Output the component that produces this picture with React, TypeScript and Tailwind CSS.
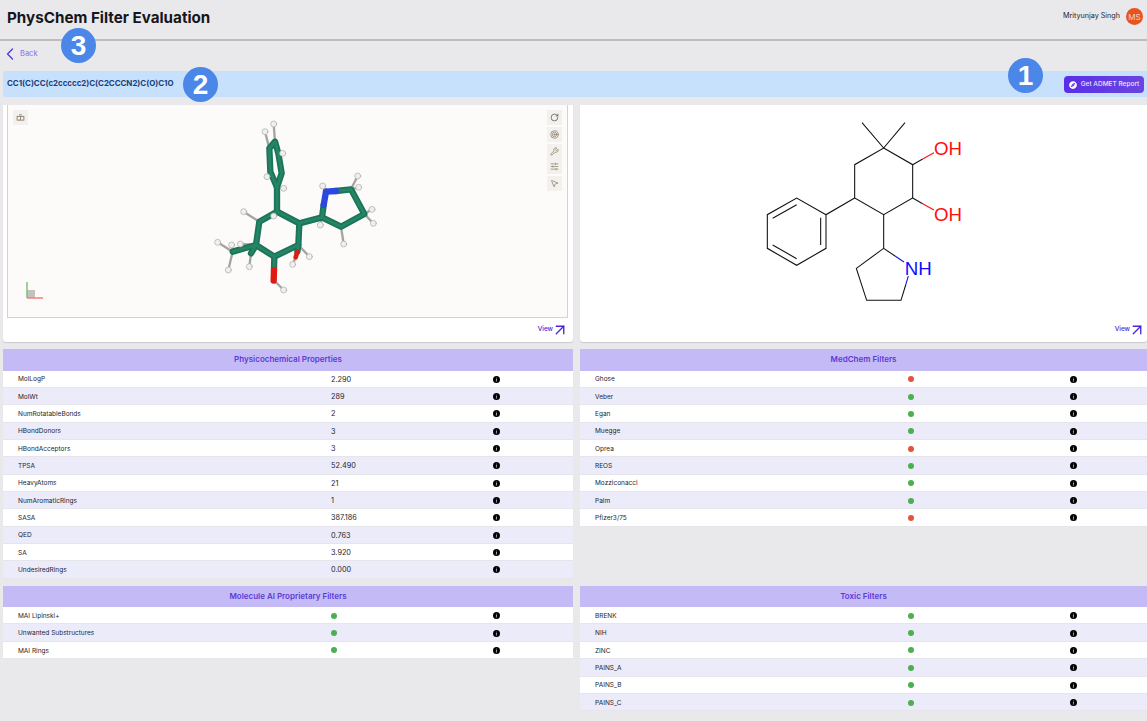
import { ArrowUpRight, ChevronLeft, MousePointer2, RotateCw, SlidersHorizontal, Target, Wrench } from 'lucide-react'
import { BsInfoCircleFill } from 'react-icons/bs'
import { FaCompass } from 'react-icons/fa'

const physProps = [
  ['MolLogP', '2.290'],
  ['MolWt', '289'],
  ['NumRotatableBonds', '2'],
  ['HBondDonors', '3'],
  ['HBondAcceptors', '3'],
  ['TPSA', '52.490'],
  ['HeavyAtoms', '21'],
  ['NumAromaticRings', '1'],
  ['SASA', '387.186'],
  ['QED', '0.763'],
  ['SA', '3.920'],
  ['UndesiredRings', '0.000'],
]
const medChem: [string, boolean][] = [
  ['Ghose', false],
  ['Veber', true],
  ['Egan', true],
  ['Muegge', true],
  ['Oprea', false],
  ['REOS', true],
  ['Mozziconacci', true],
  ['Palm', true],
  ['Pfizer3/75', false],
]
const maiFilters: [string, boolean][] = [
  ['MAI Lipinski+', true],
  ['Unwanted Substructures', true],
  ['MAI Rings', true],
]
const toxicFilters: [string, boolean][] = [
  ['BRENK', true],
  ['NIH', true],
  ['ZINC', true],
  ['PAINS_A', true],
  ['PAINS_B', true],
  ['PAINS_C', true],
]

// 3D model, coordinates from a 600x600 canvas
const hBonds = [
  [252, 95, 248, 42], [235, 115, 222, 65], [262, 130, 275, 130], [238, 185, 228, 200], [258, 232, 278, 235],
  [205, 335, 158, 305], [258, 305, 248, 318], [125, 425, 80, 397], [125, 425, 122, 405], [125, 425, 112, 480],
  [195, 405, 148, 402], [180, 430, 175, 470], [322, 405, 355, 440], [315, 440, 305, 463], [248, 510, 278, 540],
  [405, 245, 395, 228], [480, 238, 500, 198], [480, 238, 503, 232], [520, 312, 543, 298], [520, 312, 547, 340],
  [393, 322, 388, 345], [450, 350, 458, 402],
]
const greenBonds = [
  'M252 95L235 115L238 185L258 232L272 190L262 130Z',
  'M258 232L258 305',
  'M258 305L205 335L195 405L250 440L322 405L325 340Z',
  'M325 340L393 322L450 350L520 312L480 238L435 243',
  'M393 322L398 285',
  'M195 405L125 425M195 405L180 430',
  'M250 440L249 480M322 405L319 425',
]

const Molecule3D = () => (
  <svg viewBox="0 0 600 600" className="absolute left-[183px] top-[5px] w-[200px] h-[200px]" fill="none" strokeLinecap="round" strokeLinejoin="round">
    {hBonds.map(([a, b, c, d]) => (
      <line key={`${c}-${d}`} x1={a} y1={b} x2={c} y2={d} stroke="#a4a4a2" strokeWidth="7" />
    ))}
    {greenBonds.map((d) => (
      <path key={d} d={d} stroke="#1b7558" strokeWidth="19" />
    ))}
    {greenBonds.map((d) => (
      <path key={`${d}-light`} d={d} stroke="#268467" strokeWidth="8" />
    ))}
    <path d="M405 245L398 285" stroke="#2a48e0" strokeWidth="19" />
    <path d="M405 245L435 243" stroke="#2a48e0" strokeWidth="19" />
    <path d="M249 480L248 512" stroke="#e01a12" strokeWidth="19" />
    <path d="M319 425L314 442" stroke="#d8201a" strokeWidth="14" />
    {hBonds.map(([, , c, d]) => (
      <circle key={`${c}_${d}`} cx={c} cy={d} r="9" fill="#efefed" stroke="#a8a8a6" strokeWidth="2" />
    ))}
  </svg>
)

const Molecule2D = () => (
  <svg viewBox="0 0 720 600" className="w-[240px] h-[200px]" fill="none" stroke="#111" strokeWidth="3.2">
    <path d="M366 38L431 114L495 38M431 114L518 164L518 264L431 314L344 264L344 164Z" />
    <path d="M344 264L258 314L258 415L170 466L82 415L82 314L170 264L258 314" />
    <path d="M242 323L242 405M170 284L98 325M170 446L98 405" />
    <path d="M431 314L431 415L349 475L380 571L483 571L497 525" />
    <path d="M431 415L465 438" />
    <path d="M465 438L492 456" stroke="#1a1ae0" />
    <path d="M518 164L548 147" />
    <path d="M548 147L582 128" stroke="#ff1010" />
    <path d="M518 264L548 281" />
    <path d="M548 281L582 300" stroke="#ff1010" />
    <path d="M497 525L505 498" stroke="#1a1ae0" />
    <text x="582" y="134" fill="#ff0d0d" stroke="none" fontSize="56" fontFamily="Liberation Sans, sans-serif">OH</text>
    <text x="582" y="334" fill="#ff0d0d" stroke="none" fontSize="56" fontFamily="Liberation Sans, sans-serif">OH</text>
    <text x="494" y="494" fill="#0d0dff" stroke="none" fontSize="56" fontFamily="Liberation Sans, sans-serif">NH</text>
  </svg>
)

const ToolButton = ({ children }: { children: React.ReactNode }) => (
  <div className="w-[15px] h-[15px] bg-[#f3f1ee] flex items-center justify-center text-[#8b7d68]">{children}</div>
)

const ViewLink = ({ className }: { className: string }) => (
  <div className={`flex items-center justify-end h-[24px] text-[6.5px] font-medium text-[#4a26d8] ${className}`}>
    View <ArrowUpRight size={18} strokeWidth={1.8} className="-ml-[2px]" />
  </div>
)

const InfoIcon = () => <BsInfoCircleFill className="w-[7px] h-[7px] text-black" />

const StatusDot = ({ ok }: { ok: boolean }) => (
  <span className={`w-[6px] h-[6px] rounded-full ${ok ? 'bg-[#4caf50]' : 'bg-[#e5533d]'}`} />
)

const TableHeader = ({ title }: { title: string }) => (
  <div className="h-[21.5px] bg-[#c4baf6] flex items-center justify-center pb-[1px] text-[8px] font-semibold text-[#5a3bd8]">{title}</div>
)

const Row = ({ index, children }: { index: number; children: React.ReactNode }) => (
  <div className={`h-[17.35px] grid grid-cols-[313px_162px_1fr] items-center pl-[15px] pt-[1px] border-b border-[#e6e5ec] text-[6.5px] text-[#24242c] ${index % 2 ? 'bg-[#ecebf9]' : 'bg-white'}`}>
    {children}
  </div>
)

const StatusTable = ({ title, rows }: { title: string; rows: [string, boolean][] }) => (
  <section>
    <TableHeader title={title} />
    {rows.map(([name, ok], i) => (
      <Row key={name} index={i}>
        <span className="pt-[2px]">{name}</span>
        <StatusDot ok={ok} />
        <InfoIcon />
      </Row>
    ))}
  </section>
)

const Badge = ({ n, className }: { n: number; className: string }) => (
  <div className={`absolute w-[35px] h-[35px] rounded-full bg-[#4b87e8] text-white flex items-center justify-center text-[28px] font-bold font-[Liberation_Sans,sans-serif] ${className}`}>
    {n}
  </div>
)

export default function App() {
  return (
    <div className="relative w-[1147px] h-[721px] overflow-hidden bg-[#e9e9eb] font-[Inter,sans-serif]">
      {/* Header */}
      <header className="h-[41px] flex items-center justify-between pl-[7px] pr-[4px] border-b-2 border-[#bdbdbf] pb-[3px]">
        <h1 className="text-[15.2px] font-bold text-[#16161c]">PhysChem Filter Evaluation</h1>
        <div className="flex items-center gap-[6px] -mt-[3px]">
          <span className="text-[7.2px] text-[#22222e]">Mrityunjay Singh</span>
          <span className="w-[17px] h-[17px] rounded-full bg-[#e8531f] text-[#f6d5c6] text-[8px] flex items-center justify-center">MS</span>
        </div>
      </header>

      {/* Back */}
      <div className="h-[30px] flex items-center pb-[4px] text-[7.5px] text-[#8b6cf0]">
        <ChevronLeft size={20} strokeWidth={1.6} className="text-[#5b34e0]" />
        Back
      </div>

      {/* SMILES bar */}
      <div className="h-[26px] ml-[3px] flex items-center justify-between pl-[4px] pr-[3px] bg-[#c7e0fb] rounded-l-[2px]">
        <span className="text-[7.9px] font-bold text-[#17407a]">CC1(C)CC(c2ccccc2)C(C2CCCN2)C(O)C1O</span>
        <button className="w-[80px] h-[17px] mt-[1px] flex items-center justify-center gap-[4px] rounded-[4px] bg-gradient-to-r from-[#5a2de8] to-[#6b45e0] text-[6.5px] font-medium text-[#e9e5fb]">
          <FaCompass className="w-[8px] h-[8px] text-white" />
          Get ADMET Report
        </button>
      </div>

      <main className="mt-[8px] ml-[3px] grid grid-cols-[570px_567px] gap-x-[7px]">
        {/* Viewer */}
        <div className="h-[237px] bg-white rounded-b-[3px] shadow-[0_1px_1px_#c9c9cb] pl-[4px] pr-[5px]">
          <div className="relative h-[213px] bg-[#fdfbf9] border border-t-0 border-[#d6d3ca] flex justify-between p-[5px]">
            <ToolButton>
              <svg viewBox="0 0 12 12" className="w-[9px] h-[9px]" fill="none" stroke="currentColor" strokeWidth="1.2">
                <path d="M4 2.5h4" />
                <rect x="1.5" y="4.5" width="9" height="5" />
                <path d="M6 4.5v5" />
              </svg>
            </ToolButton>
            <div className="flex flex-col gap-[2px]">
              <ToolButton><RotateCw size={9} className="text-[#555]" /></ToolButton>
              <ToolButton><Target size={9} /></ToolButton>
              <div>
                <ToolButton><Wrench size={9} /></ToolButton>
                <ToolButton><SlidersHorizontal size={9} /></ToolButton>
              </div>
              <ToolButton><MousePointer2 size={9} /></ToolButton>
            </div>
            <Molecule3D />
            {/* axes */}
            <svg viewBox="0 0 20 20" className="absolute left-[17px] bottom-[16px] w-[20px] h-[20px]">
              <rect x="2" y="9" width="8" height="8" fill="#c4c2be" />
              <path d="M2 1V17" stroke="#7fbf7f" strokeWidth="1.5" />
              <path d="M2 17H18" stroke="#f27f7f" strokeWidth="1.5" />
            </svg>
          </div>
          <ViewLink className="-mr-[1px]" />
        </div>

        {/* 2D structure */}
        <div className="h-[237px] bg-white rounded-b-[3px] shadow-[0_1px_1px_#c9c9cb] flex flex-col">
          <div className="h-[213px] flex justify-center pt-[5px] pr-[7px]">
            <Molecule2D />
          </div>
          <ViewLink className="pr-[1px]" />
        </div>

        <section className="mt-[7px]">
          <TableHeader title="Physicochemical Properties" />
          {physProps.map(([name, value], i) => (
            <Row key={name} index={i}>
              <span className="pt-[2px]">{name}</span>
              <span className="pt-[2px] text-[7.3px]">{value}</span>
              <InfoIcon />
            </Row>
          ))}
        </section>

        <div className="mt-[7px]">
          <StatusTable title="MedChem Filters" rows={medChem} />
        </div>

        <div className="mt-[7px]">
          <StatusTable title="Molecule AI Proprietary Filters" rows={maiFilters} />
        </div>

        <div className="mt-[7px]">
          <StatusTable title="Toxic Filters" rows={toxicFilters} />
        </div>
      </main>

      {/* Callouts */}
      <Badge n={3} className="left-[61px] top-[28px]" />
      <Badge n={2} className="left-[183px] top-[67px]" />
      <Badge n={1} className="left-[1008px] top-[58px]" />
    </div>
  )
}
